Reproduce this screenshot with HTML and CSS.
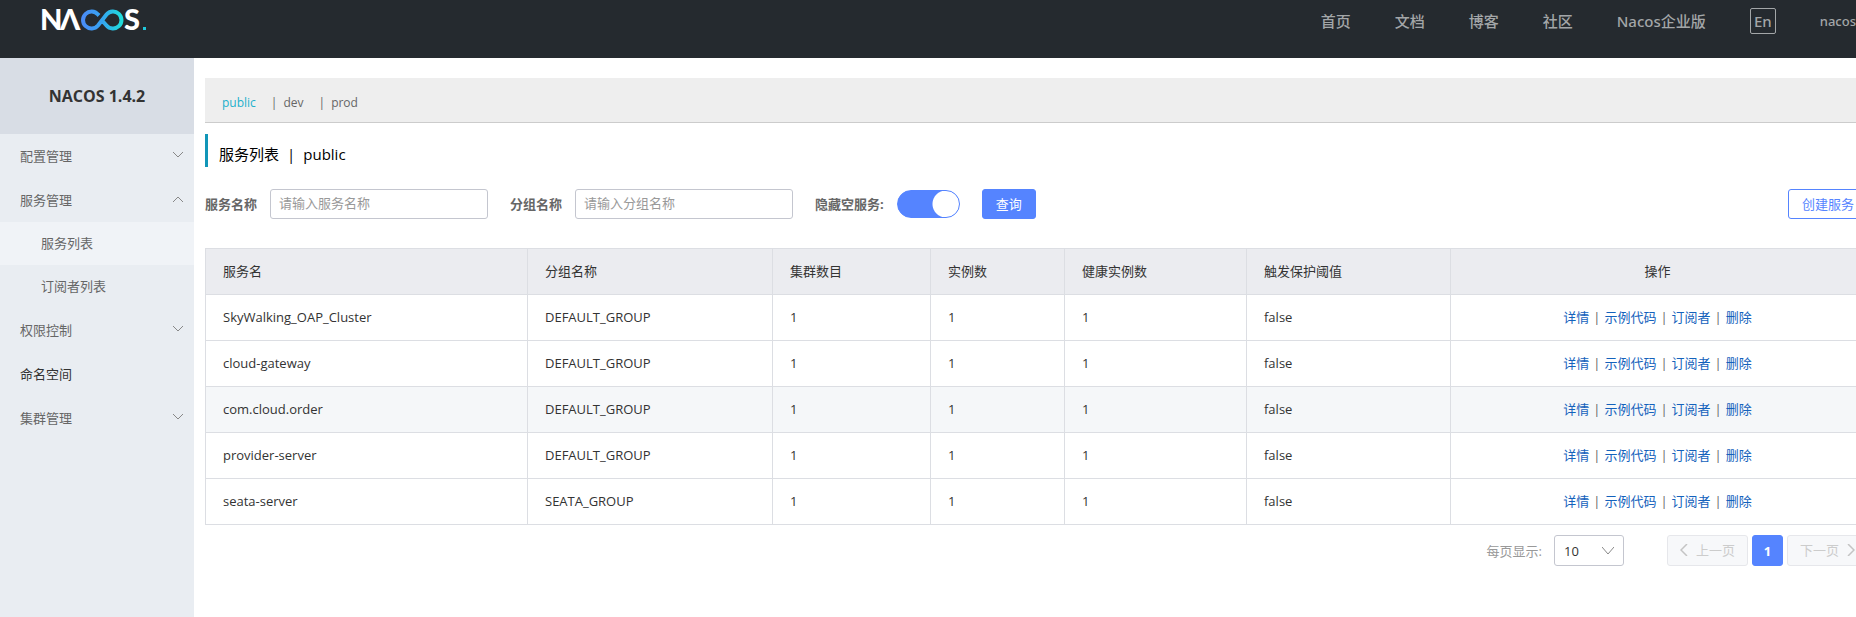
FILE: index.html
```
<!DOCTYPE html>
<html lang="zh-CN">

<head>
    <meta charset="UTF-8">
    <meta name="viewport" content="width=device-width, initial-scale=1.0">
    <title>Nacos</title>
    <link rel="stylesheet" href="styles.css">
</head>

<body>
    <div class="app">
        <header class="header">
            <a class="logo" href="#" aria-label="Nacos">
                <svg width="108" height="40" viewBox="0 -8 108 40">
                    <defs>
                        <linearGradient id="loop" x1="0" x2="1" y1="0" y2="0">
                            <stop offset="0" stop-color="#4a8cf7" />
                            <stop offset="0.5" stop-color="#35a5f0" />
                            <stop offset="1" stop-color="#1fdcdc" />
                        </linearGradient>
                    </defs>
                    <text class="logo-text" x="-1" y="22">N</text>
                    <text class="logo-text" x="19" y="22">Λ</text>
                    <path d="M58 7.5 L57 6.5 A8.5 8.5 0 1 0 57 17.5 L65.5 6.5 A8.5 8.5 0 1 1 65.5 17.5 L61.5 13" fill="none" stroke="url(#loop)" stroke-width="4" />
                    <text class="logo-text" x="83" y="22">S</text>
                    <rect x="102" y="19" width="3" height="3" fill="#1fc8dc" />
                </svg>
            </a>
            <nav class="nav">
                <a href="#">首页</a>
                <a href="#">文档</a>
                <a href="#">博客</a>
                <a href="#">社区</a>
                <a href="#">Nacos企业版</a>
                <button class="lang">En</button>
                <a class="user" href="#">nacos</a>
            </nav>
        </header>

        <div class="body">
            <aside class="sidebar">
                <h1 class="version">NACOS 1.4.2</h1>
                <ul class="menu">
                    <li><a href="#">配置管理 <svg class="arrow" viewBox="0 0 10 6"><path d="M0 0l5 5 5-5" /></svg></a></li>
                    <li>
                        <a href="#">服务管理 <svg class="arrow" viewBox="0 0 10 6"><path d="M0 6l5-5 5 5" /></svg></a>
                        <ul class="submenu">
                            <li><a class="active" href="#">服务列表</a></li>
                            <li><a href="#">订阅者列表</a></li>
                        </ul>
                    </li>
                    <li><a href="#">权限控制 <svg class="arrow" viewBox="0 0 10 6"><path d="M0 0l5 5 5-5" /></svg></a></li>
                    <li><a class="single" href="#">命名空间</a></li>
                    <li><a href="#">集群管理 <svg class="arrow" viewBox="0 0 10 6"><path d="M0 0l5 5 5-5" /></svg></a></li>
                </ul>
            </aside>

            <main class="main">
                <div class="namespaces">
                    <a class="active" href="#">public</a>
                    <span>|</span>
                    <a href="#">dev</a>
                    <span>|</span>
                    <a href="#">prod</a>
                </div>

                <h2 class="title"><span>服务列表</span><span>|</span><span>public</span></h2>

                <form class="filters">
                    <label for="service">服务名称</label>
                    <input type="text" id="service" placeholder="请输入服务名称">
                    <label for="group">分组名称</label>
                    <input type="text" id="group" placeholder="请输入分组名称">
                    <label for="hide-empty">隐藏空服务:</label>
                    <input type="checkbox" id="hide-empty" class="switch" checked>
                    <button type="button" class="btn-primary">查询</button>
                    <button type="button" class="btn-create">创建服务</button>
                </form>

                <table class="services">
                    <colgroup>
                        <col class="col-name">
                        <col class="col-group">
                        <col class="col-cluster">
                        <col class="col-instance">
                        <col class="col-healthy">
                        <col class="col-protect">
                        <col>
                    </colgroup>
                    <thead>
                        <tr>
                            <th>服务名</th>
                            <th>分组名称</th>
                            <th>集群数目</th>
                            <th>实例数</th>
                            <th>健康实例数</th>
                            <th>触发保护阈值</th>
                            <th class="actions">操作</th>
                        </tr>
                    </thead>
                    <tbody>
                        <tr>
                            <td>SkyWalking_OAP_Cluster</td>
                            <td>DEFAULT_GROUP</td>
                            <td>1</td>
                            <td>1</td>
                            <td>1</td>
                            <td>false</td>
                            <td class="actions"><a href="#">详情</a><span>|</span><a href="#">示例代码</a><span>|</span><a href="#">订阅者</a><span>|</span><a href="#">删除</a></td>
                        </tr>
                        <tr>
                            <td>cloud-gateway</td>
                            <td>DEFAULT_GROUP</td>
                            <td>1</td>
                            <td>1</td>
                            <td>1</td>
                            <td>false</td>
                            <td class="actions"><a href="#">详情</a><span>|</span><a href="#">示例代码</a><span>|</span><a href="#">订阅者</a><span>|</span><a href="#">删除</a></td>
                        </tr>
                        <tr class="hovered">
                            <td>com.cloud.order</td>
                            <td>DEFAULT_GROUP</td>
                            <td>1</td>
                            <td>1</td>
                            <td>1</td>
                            <td>false</td>
                            <td class="actions"><a href="#">详情</a><span>|</span><a href="#">示例代码</a><span>|</span><a href="#">订阅者</a><span>|</span><a href="#">删除</a></td>
                        </tr>
                        <tr>
                            <td>provider-server</td>
                            <td>DEFAULT_GROUP</td>
                            <td>1</td>
                            <td>1</td>
                            <td>1</td>
                            <td>false</td>
                            <td class="actions"><a href="#">详情</a><span>|</span><a href="#">示例代码</a><span>|</span><a href="#">订阅者</a><span>|</span><a href="#">删除</a></td>
                        </tr>
                        <tr>
                            <td>seata-server</td>
                            <td>SEATA_GROUP</td>
                            <td>1</td>
                            <td>1</td>
                            <td>1</td>
                            <td>false</td>
                            <td class="actions"><a href="#">详情</a><span>|</span><a href="#">示例代码</a><span>|</span><a href="#">订阅者</a><span>|</span><a href="#">删除</a></td>
                        </tr>
                    </tbody>
                </table>

                <div class="pagination">
                    <label for="page-size">每页显示:</label>
                    <div class="select">
                        <select id="page-size">
                            <option>10</option>
                            <option>20</option>
                            <option>50</option>
                        </select>
                        <svg class="select-arrow" viewBox="0 0 12 8"><path d="M0 0l6 7 6-7" /></svg>
                    </div>
                    <button class="page-btn" disabled><svg class="page-arrow" viewBox="0 0 8 12"><path d="M7 0L1 6l6 6" /></svg>上一页</button>
                    <button class="page-btn current">1</button>
                    <button class="page-btn" disabled>下一页<svg class="page-arrow" viewBox="0 0 8 12"><path d="M1 0l6 6-6 6" /></svg></button>
                </div>
            </main>
        </div>
    </div>
</body>

</html>
```
FILE: styles.css
```
* {
    margin: 0;
    padding: 0;
    box-sizing: border-box;
}

body {
    overflow: hidden;
    background-color: #fff;
    color: #333;
    font-family: "Open Sans", "Noto Sans CJK SC", sans-serif;
    font-size: 13px;
}

a {
    color: inherit;
    text-decoration: none;
}

ul {
    list-style: none;
}

input,
select,
button {
    font: inherit;
}

button {
    cursor: pointer;
}

/* the console is a little wider than the window */
.app {
    display: flex;
    flex-direction: column;
    width: calc(100% + 20px);
    min-height: 100vh;
}

.header {
    display: flex;
    justify-content: space-between;
    align-items: flex-start;
    height: 58px;
    padding: 0 20px 0 41px;
    background-color: #252a2f;
}

.logo svg {
    display: block;
}

.logo-text {
    fill: #fff;
    font-family: Lato, Inter, sans-serif;
    font-size: 29px;
    font-weight: 900;
}

.nav {
    display: flex;
    align-items: center;
    gap: 44px;
    padding-top: 8px;
    color: #a3a6a8;
    font-family: "Noto Sans", "Noto Sans CJK SC", sans-serif;
    font-size: 15px;
    font-weight: 500;
    line-height: 26px;
}

.lang {
    width: 26px;
    height: 26px;
    border: 1px solid #a3a6a8;
    border-radius: 2px;
    background: none;
    color: inherit;
    line-height: 22px;
}

.user {
    font-size: 13px;
}

.body {
    display: flex;
    flex: 1;
}

.sidebar {
    width: 194px;
    background-color: #e9edf2;
    color: #666;
}

.version {
    height: 76px;
    background-color: #d8dde5;
    color: #333;
    font-size: 16px;
    line-height: 76px;
    text-align: center;
}

.menu a {
    display: flex;
    justify-content: space-between;
    align-items: center;
    height: 44px;
    padding: 0 11px 2px 20px;
}

.menu .submenu a {
    height: 43px;
    padding-left: 41px;
}

.menu .active {
    background-color: #f0f3f7;
}

.menu .single {
    color: #333;
}

.arrow {
    width: 10px;
    height: 6px;
    fill: none;
    stroke: #888;
}

.main {
    flex: 1;
    padding: 20px 8px 0 11px;
}

.namespaces {
    display: flex;
    gap: 6px;
    height: 45px;
    padding: 0 17px;
    border-bottom: 1px solid #ccc;
    background-color: #eee;
    color: #666;
    font-size: 12px;
    line-height: 50px;
}

.namespaces a {
    padding-right: 9px;
}

.namespaces .active {
    color: #22b0cc;
}

.title {
    display: flex;
    gap: 8px;
    height: 33px;
    margin: 11px 0 22px;
    padding-left: 11px;
    border-left: 3px solid #1196b8;
    color: #000;
    font-size: 15px;
    font-weight: normal;
    line-height: 40px;
}

.filters {
    display: flex;
    align-items: center;
    margin-bottom: 29px;
}

.filters label {
    margin-right: 13px;
    padding-bottom: 2px;
    color: #666;
    font-weight: bold;
}

.filters input[type="text"] {
    width: 218px;
    height: 30px;
    margin-right: 22px;
    padding: 0 8px 2px;
    border: 1px solid #c4c6cf;
    border-radius: 3px;
    outline: none;
}

.filters ::placeholder {
    color: #999;
}

.switch {
    width: 63px;
    height: 28px;
    margin-right: 22px;
    border: 1px solid #5584ff;
    border-radius: 14px;
    background: radial-gradient(circle at 48px 13px, #fff 13px, #5584ff 14px);
    appearance: none;
    cursor: pointer;
}

.btn-primary,
.btn-create {
    height: 30px;
    padding: 0 13px 2px;
    border: 1px solid #5584ff;
    border-radius: 3px;
}

.btn-primary {
    background-color: #5584ff;
    color: #fff;
}

.btn-create {
    margin-left: auto;
    background-color: #fff;
    color: #5584ff;
}

.services {
    width: 100%;
    border-collapse: collapse;
    table-layout: fixed;
}

.services th,
.services td {
    height: 46px;
    padding: 0 17px 2px;
    border: 1px solid #dcdee3;
    font-weight: normal;
    text-align: left;
}

.services th {
    background-color: #ebecf0;
}

.services .hovered {
    background-color: #f5f7f9;
}

.services .actions {
    padding-right: 20px;
    color: #666;
    text-align: center;
}

.services th.actions {
    color: #333;
}

.actions a {
    color: #1462bc;
}

.actions span {
    margin: 0 4px;
}

.col-name {
    width: 322px;
}

.col-group {
    width: 245px;
}

.col-cluster {
    width: 158px;
}

.col-instance {
    width: 134px;
}

.col-healthy {
    width: 182px;
}

.col-protect {
    width: 204px;
}

.pagination {
    display: flex;
    justify-content: flex-end;
    align-items: center;
    gap: 4px;
    margin-top: 10px;
    color: #999;
}

.select {
    position: relative;
    margin: 0 39px 0 8px;
}

.select select {
    width: 70px;
    height: 31px;
    padding-left: 9px;
    border: 1px solid #c4c6cf;
    border-radius: 3px;
    background-color: #fff;
    color: #333;
    appearance: none;
}

.select-arrow {
    position: absolute;
    top: 12px;
    right: 10px;
    width: 12px;
    height: 8px;
    fill: none;
    stroke: #888;
    pointer-events: none;
}

.page-btn {
    display: flex;
    align-items: center;
    justify-content: center;
    gap: 8px;
    height: 31px;
    min-width: 31px;
    padding: 0 12px 2px;
    border: 1px solid #e6e7eb;
    border-radius: 3px;
    background-color: #f7f8fa;
    color: #ccc;
}

.page-btn.current {
    padding: 0;
    border-color: #5584ff;
    background-color: #5584ff;
    color: #fff;
    font-weight: bold;
}

.page-arrow {
    width: 8px;
    height: 12px;
    fill: none;
    stroke: #c4c4c4;
    stroke-width: 1.5;
}
```
